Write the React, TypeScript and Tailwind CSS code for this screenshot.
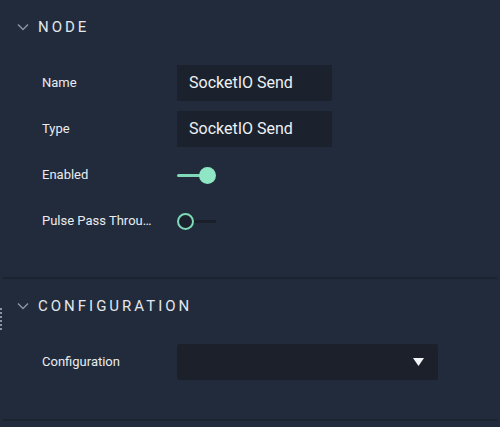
import React from "react";

type RowProps = {
	label: string;
	children: React.ReactNode;
};

function Chevron() {
	return (
		<svg width="12" height="8" viewBox="0 0 12 8" className="mr-[9px] ml-[17px]">
			<path d="M1 1.5 L6 6.5 L11 1.5" fill="none" stroke="#8a93a3" strokeWidth="1.5" />
		</svg>
	);
}

function SectionHeader({ title }: { title: string }) {
	return (
		<div className="flex h-[54px] items-center">
			<Chevron />
			<span className="text-[15px] tracking-[3px] text-[#e3e7ee]">{title}</span>
		</div>
	);
}

function Row({ label, children }: RowProps) {
	return (
		<div className="flex h-[46px] items-center">
			<div className="w-[177px] shrink-0 truncate pl-[42px] pr-[23px] text-[13px] text-[#e8ecf1]">{label}</div>
			{children}
		</div>
	);
}

function TextField({ value }: { value: string }) {
	return (
		<div className="flex h-[36px] w-[155px] items-center bg-[#1b222d] pl-[12px] text-[16px] text-[#eef1f5]">
			{value}
		</div>
	);
}

function Toggle({ on }: { on: boolean }) {
	if (on) {
		return (
			<div className="flex w-[40px] items-center">
				<div className="h-[3px] w-[24px] rounded-full bg-[#7fd8b6]" />
				<div className="-ml-[2px] size-[17px] rounded-full bg-[#8ee6c4]" />
			</div>
		);
	}
	return (
		<div className="flex w-[40px] items-center">
			<div className="size-[17px] rounded-full border-2 border-[#7fd8b6] bg-[#1b222d]" />
			<div className="h-[3px] w-[22px] bg-[#1a202a]" />
		</div>
	);
}

export default function App() {
	return (
		<div className="relative h-[427px] w-[500px] overflow-hidden bg-[#222b3b] font-['Roboto',sans-serif]">
			<SectionHeader title="NODE" />
			<div className="mt-[6px] pb-[33px]">
				<Row label="Name">
					<TextField value="SocketIO Send" />
				</Row>
				<Row label="Type">
					<TextField value="SocketIO Send" />
				</Row>
				<Row label="Enabled">
					<Toggle on />
				</Row>
				<Row label="Pulse Pass Through">
					<Toggle on={false} />
				</Row>
			</div>
			<div className="mx-[3px] h-[2px] bg-[#1b2230]" />
			<SectionHeader title="CONFIGURATION" />
			<div className="mt-[6px] pb-[34px]">
				<Row label="Configuration">
					<div className="flex h-[36px] w-[261px] items-center justify-end rounded-[3px] bg-[#1b202b] pr-[14px]">
						<svg width="11" height="8" viewBox="0 0 11 8">
							<polygon points="0,0 11,0 5.5,8" fill="#f2f4f7" />
						</svg>
					</div>
				</Row>
			</div>
			<div className="mx-[3px] h-[2px] bg-[#1b2230]" />
			{/* resize grip on the left edge */}
			<div className="absolute left-0 top-[308px] h-[22px] w-[2px] border-l-2 border-dotted border-[#8c94a2]" />
		</div>
	);
}
